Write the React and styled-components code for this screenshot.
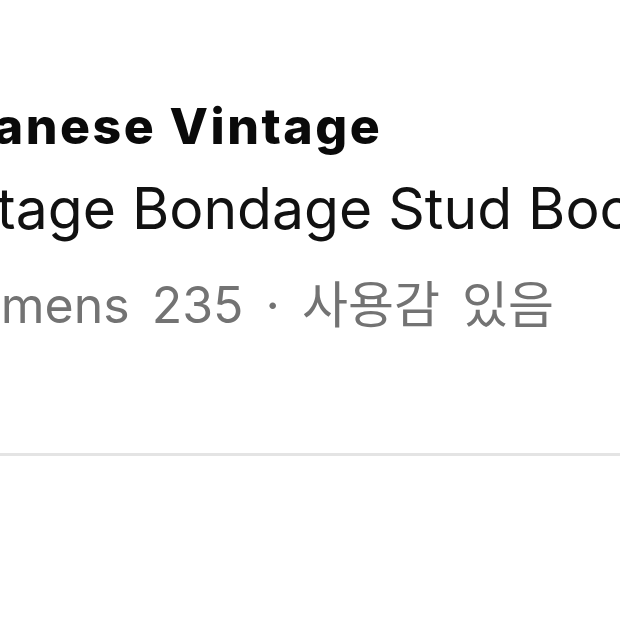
import React from "react";
import styled, { createGlobalStyle } from "styled-components";

const GlobalStyle = createGlobalStyle`
  html, body {
    margin: 0;
    padding: 0;
    background: #fff;
  }
  body {
    font-family: Inter, "Noto Sans CJK KR", sans-serif;
    -webkit-font-smoothing: antialiased;
  }
`;

const Page = styled.div`
  width: 620px;
  height: 620px;
  overflow: hidden;
  background: #fff;
`;

const Info = styled.div`
  display: flex;
  flex-direction: column;
  padding-top: 96px;
  margin-left: -90px;
  white-space: nowrap;
`;

const Brand = styled.div`
  margin-left: -15px;
  font-size: 50px;
  font-weight: 800;
  letter-spacing: 2.5px;
  line-height: 60px;
  color: #0a0a0a;
`;

const Name = styled.div`
  margin-top: 20px;
  font-size: 57px;
  font-weight: 400;
  line-height: 66px;
  color: #111;
`;

const Meta = styled.div`
  margin-top: 33px;
  margin-left: 14px;
  font-size: 50px;
  line-height: 60px;
  word-spacing: 8px;
  color: #737373;
`;

const Divider = styled.hr`
  margin: 118px 0 0;
  border: 0;
  height: 3px;
  background: #e4e4e4;
`;

export default function App() {
  const item = {
    brand: "Japanese Vintage",
    name: "Vintage Bondage Stud Boots",
    size: "Womens 235",
    condition: "사용감 있음",
  };

  return (
    <>
      <GlobalStyle />
      <Page>
        <Info>
          <Brand>{item.brand}</Brand>
          <Name>{item.name}</Name>
          <Meta>{item.size} · {item.condition}</Meta>
        </Info>
        <Divider />
      </Page>
    </>
  );
}
